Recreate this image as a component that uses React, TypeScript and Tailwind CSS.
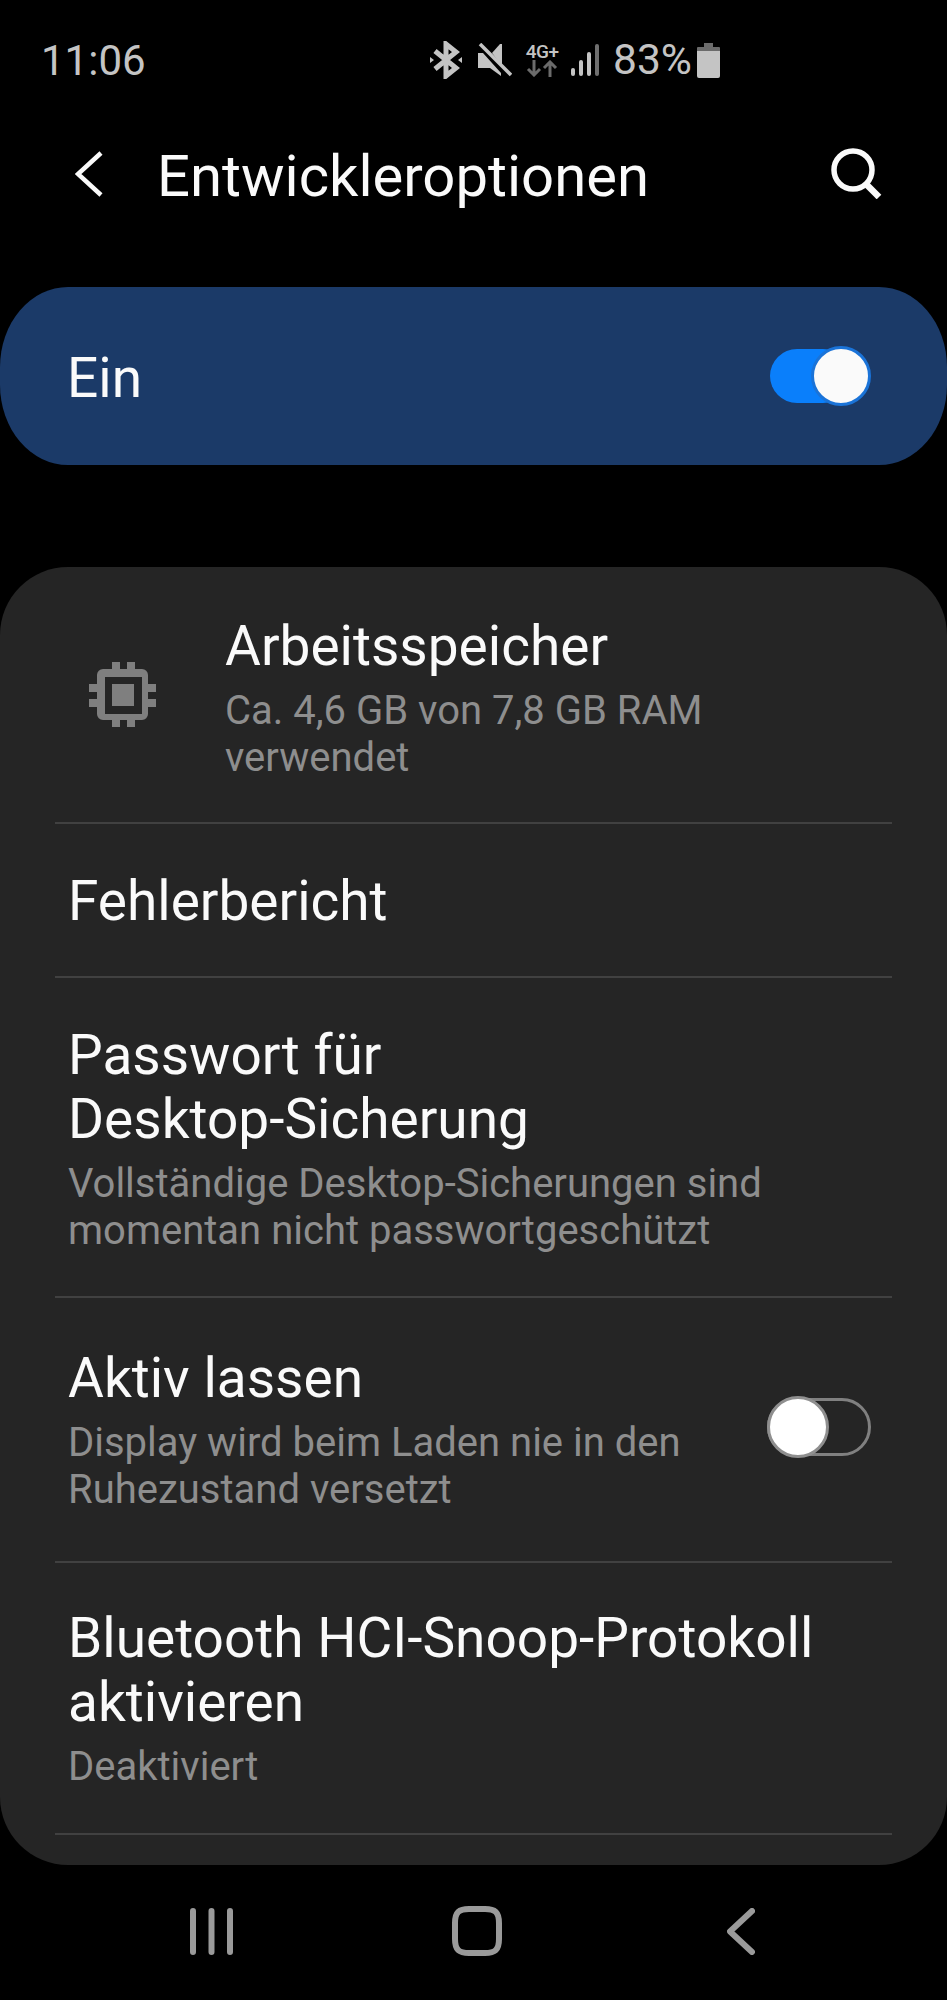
import React from "react";

const font = { fontFamily: "Roboto, sans-serif" };

function Divider() {
  return <div className="mx-[55px] h-[2px] bg-[#414141]" />;
}

function Title({ children }: { children: React.ReactNode }) {
  return <div className="text-[55px] leading-[64px] text-[#fafafa]">{children}</div>;
}

function Sub({ children }: { children: React.ReactNode }) {
  return <div className="mt-[9px] text-[40px] leading-[47px] text-[#8e8e8e]">{children}</div>;
}

function Chip() {
  return (
    <svg width="70" height="70" viewBox="0 0 70 70" fill="#7f7f7f">
      <path fillRule="evenodd" d="M14 7h39a6 6 0 0 1 6 6v39a6 6 0 0 1-6 6H14a6 6 0 0 1-6-6V13a6 6 0 0 1 6-6zm2 8v37h37V15z" />
      <rect x="23" y="22" width="22" height="22" />
      <rect x="23" y="0" width="8" height="7" />
      <rect x="38" y="0" width="8" height="7" />
      <rect x="23" y="58" width="8" height="7" />
      <rect x="38" y="58" width="8" height="7" />
      <rect x="0" y="22" width="8" height="8" />
      <rect x="0" y="37" width="8" height="8" />
      <rect x="59" y="22" width="8" height="8" />
      <rect x="59" y="37" width="8" height="8" />
    </svg>
  );
}

function StatusIcons() {
  return (
    <div className="flex items-center text-[#c4c4c4]">
      <svg width="32" height="38" viewBox="0 0 32 38" fill="none" stroke="#c4c4c4" strokeWidth="5">
        <path d="M5 10 26 27 16 35V3l10 8L5 28" />
        <path d="M0 16l4 3-4 3zM32 16l-4 3 4 3z" fill="#c4c4c4" stroke="none" />
      </svg>
      <svg className="ml-[16px]" width="34" height="34" viewBox="0 0 34 34" fill="#c4c4c4">
        <path d="M0 10h5l18 20v3L12 25H0z" />
        <path d="M14 10 22 1h2v22z" />
        <path d="M2 1 33 32" stroke="#c4c4c4" strokeWidth="3.5" />
      </svg>
      <div className="ml-[12px] flex w-[36px] flex-col items-center">
        <span className="text-[19px] leading-[15px] font-medium tracking-[-0.5px] whitespace-nowrap">4G+</span>
        <svg className="mt-[1px]" width="32" height="17" viewBox="0 0 32 17" fill="none" stroke="#6b6b6b" strokeWidth="3">
          <path d="M8 0v15M2 9l6 6 6-6" />
          <path d="M24 17V2M18 8l6-6 6 6" />
        </svg>
      </div>
      <svg className="ml-[10px]" width="30" height="34" viewBox="0 0 30 34" fill="none" strokeWidth="4" strokeLinecap="round">
        <path d="M3 27v4" stroke="#c4c4c4" />
        <path d="M11 19v12" stroke="#c4c4c4" />
        <path d="M19 11v20" stroke="#c4c4c4" />
        <path d="M27 3v28" stroke="#6f6f6f" />
      </svg>
      <span className="ml-[13px] text-[42.500px] leading-[48px]">83%</span>
      <svg className="ml-[5px]" width="23" height="35" viewBox="0 0 23 35">
        <path d="M7 0h9v4H7zM1 4h21a1 1 0 0 1 1 1v3H0V5a1 1 0 0 1 1-1z" fill="#6b6b6b" />
        <path d="M0 8h23v25a2 2 0 0 1-2 2H2a2 2 0 0 1-2-2z" fill="#c4c4c4" />
      </svg>
    </div>
  );
}

export default function App() {
  return (
    <div className="h-[2000px] w-[947px] overflow-hidden bg-black" style={font}>
      <div className="flex h-[120px] items-center pl-[41px] pr-[227px] text-[#c4c4c4]">
        <span className="mt-[2px] w-[390px] text-[42px] leading-[48px]">11:06</span>
        <StatusIcons />
      </div>

      <div className="flex h-[107px] items-center pl-[75px] pr-[65px]">
        <svg width="28" height="46" viewBox="0 0 28 46" fill="none" stroke="#fafafa" strokeWidth="4.5">
          <path d="M26 2 3 23l23 21" />
        </svg>
        <h1 className="mt-[4px] ml-[54px] flex-1 text-[58px] leading-[68px] font-normal text-[#fafafa]">Entwickleroptionen</h1>
        <svg width="51" height="51" viewBox="0 0 51 51" fill="none" stroke="#fafafa" strokeWidth="5.5">
          <circle cx="22" cy="22" r="19" />
          <path d="M34 35l14 14" strokeWidth="6.5" />
        </svg>
      </div>

      <div className="mt-[60px] flex h-[178px] items-center rounded-[68px/80px] bg-[#1b3a68] pl-[67px] pr-[76px]">
        <span className="mt-[4px] flex-1 text-[55px] leading-[64px] text-[#fafafa]">Ein</span>
        <div className="relative h-[54px] w-[101px]">
          <div className="h-[54px] w-[80px] rounded-full bg-[#0a7ffb]" />
          <div className="absolute -top-[3px] right-0 h-[60px] w-[60px] rounded-full border-[3px] border-[#1a73d8] bg-[#fafafa]" />
        </div>
      </div>

      <div className="mt-[102px] h-[1298px] overflow-hidden rounded-[68px] bg-[#252525]">
        <div className="flex h-[255px] items-center pt-[5px] pl-[89px] pr-[55px]">
          <Chip />
          <div className="ml-[66px]">
            <Title>Arbeitsspeicher</Title>
            <Sub>
              Ca. 4,6 GB von 7,8 GB RAM
              <br />
              verwendet
            </Sub>
          </div>
        </div>
        <Divider />
        <div className="flex h-[152px] items-center pt-[2px] pl-[68px]">
          <Title>Fehlerbericht</Title>
        </div>
        <Divider />
        <div className="flex h-[318px] items-center pt-[2px] pl-[68px]">
          <div>
            <Title>
              Passwort für
              <br />
              Desktop-Sicherung
            </Title>
            <Sub>
              Vollständige Desktop-Sicherungen sind
              <br />
              momentan nicht passwortgeschützt
            </Sub>
          </div>
        </div>
        <Divider />
        <div className="flex h-[263px] items-center pl-[68px] pr-[76px]">
          <div className="flex-1">
            <Title>Aktiv lassen</Title>
            <Sub>
              Display wird beim Laden nie in den
              <br />
              Ruhezustand versetzt
            </Sub>
          </div>
          <div className="relative mb-[5px] h-[58px] w-[104px]">
            <div className="h-[58px] w-[104px] rounded-full border-[3px] border-[#808080]" />
            <div className="absolute -top-[2px] left-0 h-[62px] w-[62px] rounded-full border-[3px] border-[#8f8f8f] bg-white" />
          </div>
        </div>
        <Divider />
        <div className="flex h-[270px] items-center pl-[68px]">
          <div>
            <Title>
              Bluetooth HCI-Snoop-Protokoll
              <br />
              aktivieren
            </Title>
            <Sub>Deaktiviert</Sub>
          </div>
        </div>
        <Divider />
      </div>

      <div className="flex h-[135px] items-center pl-[190px] pr-[190px] pb-[3px]">
        <svg width="43" height="47" viewBox="0 0 43 47" stroke="#9a9a9a" strokeWidth="6" strokeLinecap="round">
          <path d="M3 3v41M21.500 3v41M40 3v41" />
        </svg>
        <svg className="ml-[219px]" width="50" height="50" viewBox="0 0 50 50" fill="none" stroke="#9a9a9a" strokeWidth="6">
          <path d="M17 3h16c10 0 14 3 14 14v16c0 11-4 14-14 14H17C7 47 3 44 3 33V17C3 6 7 3 17 3z" />
        </svg>
        <svg className="ml-[225px]" width="28" height="47" viewBox="0 0 28 47" fill="none" stroke="#9a9a9a" strokeWidth="6" strokeLinecap="round" strokeLinejoin="round">
          <path d="M25 3 3 23.500 25 44" />
        </svg>
      </div>
    </div>
  );
}
